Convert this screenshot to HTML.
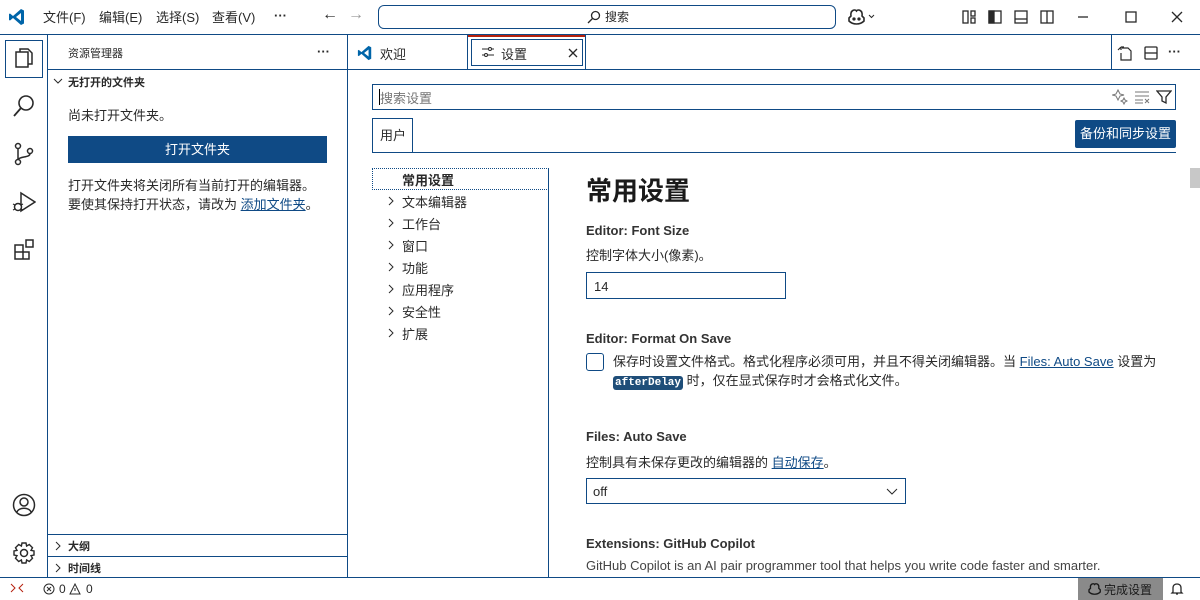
<!DOCTYPE html>
<html><head><meta charset="utf-8"><style>
*{box-sizing:border-box;margin:0;padding:0}
body{width:1200px;height:600px;overflow:hidden;background:#fff;font-family:"Liberation Sans","Noto Sans CJK SC",sans-serif;font-size:13px;color:#292929;position:relative}
.a{position:absolute}
.b{background:#0f4a85}
.t{white-space:nowrap}
svg{position:absolute;fill:none;stroke:#292929;stroke-width:1.3}
a{color:#0f4a85;text-decoration:underline}
</style></head><body>
<!-- title bar -->
<div class="a b" style="left:0;top:34px;width:1200px;height:1px"></div>
<svg style="left:8px;top:8px" width="18" height="18" viewBox="0 0 18 18"><path d="M13 1 L16 2.5 V15.5 L13 17 L5 10 L2 12.5 L1 12 V6 L2 5.5 L5 8 Z M13 5 L8 9 L13 13 Z" fill="#0065a9" stroke="none"/></svg>
<div class="a t" style="left:43px;top:7px">文件(F)</div>
<div class="a t" style="left:99px;top:7px">编辑(E)</div>
<div class="a t" style="left:156px;top:7px">选择(S)</div>
<div class="a t" style="left:212px;top:7px">查看(V)</div>
<div class="a t" style="left:274px;top:8px;font-weight:bold">···</div>
<div class="a t" style="left:322px;top:6px;font-size:16px">←</div>
<div class="a t" style="left:348px;top:6px;font-size:16px;color:#999">→</div>
<div class="a" style="left:378px;top:5px;width:458px;height:24px;border:1px solid #0f4a85;border-radius:6px"></div>
<svg style="left:587px;top:10px" width="14" height="14" viewBox="0 0 14 14"><circle cx="8.5" cy="5.5" r="4"/><path d="M5.5 8.5 L1 13"/></svg>
<div class="a t" style="left:605px;top:8px;font-size:12px">搜索</div>
<svg style="left:848px;top:8px" width="28" height="18" viewBox="0 0 28 18"><path d="M3 8 C2 2 7 1 8.5 3 C10 1 15 2 14 8 L16 10 V13 C12 17 5 17 1 13 V10 Z" fill="#fff" stroke="#292929" stroke-width="1.6"/><circle cx="6" cy="11" r="1" fill="#292929"/><circle cx="11" cy="11" r="1" fill="#292929"/><path d="M21 7 L23.5 9.5 L26 7" stroke-width="1"/></svg>
<svg style="left:962px;top:10px" width="14" height="14" viewBox="0 0 14 14"><rect x="1" y="1" width="5" height="12"/><rect x="9" y="1" width="4" height="5"/><rect x="9" y="8" width="4" height="5"/></svg>
<svg style="left:988px;top:10px" width="14" height="14" viewBox="0 0 14 14"><rect x="1" y="1" width="12" height="12"/><rect x="1" y="1" width="5" height="12" fill="#292929"/></svg>
<svg style="left:1014px;top:10px" width="14" height="14" viewBox="0 0 14 14"><rect x="1" y="1" width="12" height="12"/><path d="M1 9 H13"/></svg>
<svg style="left:1040px;top:10px" width="14" height="14" viewBox="0 0 14 14"><rect x="1" y="1" width="12" height="12"/><path d="M7 1 V13"/></svg>
<svg style="left:1076px;top:10px" width="14" height="14" viewBox="0 0 14 14"><path d="M2 7 H12"/></svg>
<svg style="left:1124px;top:10px" width="14" height="14" viewBox="0 0 14 14"><rect x="2" y="2" width="10" height="10"/></svg>
<svg style="left:1170px;top:10px" width="14" height="14" viewBox="0 0 14 14"><path d="M2 2 L12 12 M12 2 L2 12"/></svg>
<!-- activity bar -->
<div class="a b" style="left:47px;top:35px;width:1px;height:542px"></div>
<div class="a" style="left:5px;top:40px;width:38px;height:38px;border:1px solid #0f4a85"></div>
<svg style="left:12px;top:46px" width="24" height="24" viewBox="0 0 24 24"><path d="M8 6 V3 H16 L20 7 V18 H16" stroke-width="1.5"/><rect x="4" y="6" width="12" height="15" stroke-width="1.5"/></svg>
<svg style="left:12px;top:94px" width="24" height="24" viewBox="0 0 24 24"><circle cx="14" cy="9" r="7" stroke-width="1.6"/><path d="M9 14 L2 22" stroke-width="1.8"/></svg>
<svg style="left:12px;top:142px" width="24" height="24" viewBox="0 0 24 24"><circle cx="6" cy="4" r="2.5" stroke-width="1.5"/><circle cx="6" cy="20" r="2.5" stroke-width="1.5"/><circle cx="18" cy="9" r="2.5" stroke-width="1.5"/><path d="M6 6.5 V17.5 M18 11.5 C18 16 8 14 6 17.5" stroke-width="1.5"/></svg>
<svg style="left:12px;top:190px" width="24" height="24" viewBox="0 0 24 24"><path d="M9 3 L23 12 L9 21 Z" stroke-width="1.5"/><circle cx="6" cy="17" r="3.5" fill="#fff" stroke-width="1.5"/><path d="M1 14 L3 15 M1 20 L3 19 M11 14 L9 15 M11 20 L9 19" stroke-width="1.2"/></svg>
<svg style="left:12px;top:238px" width="24" height="24" viewBox="0 0 24 24"><path d="M3 7 H11 V21 H3 Z M3 14 H17 V21 H11 M14 2 L21 2 L21 9 L14 9 Z" stroke-width="1.5"/></svg>
<svg style="left:12px;top:493px" width="24" height="24" viewBox="0 0 24 24"><circle cx="12" cy="12" r="10.5" stroke-width="1.5"/><circle cx="12" cy="9" r="4" stroke-width="1.5"/><path d="M5 19 C7 14 17 14 19 19" stroke-width="1.5"/></svg>
<svg style="left:12px;top:541px" width="24" height="24" viewBox="0 0 24 24"><circle cx="12" cy="12" r="3.5" stroke-width="1.5"/><path d="M10 2 H14 L14.6 5 L17.3 3.5 L20.5 6.7 L19 9.4 L22 10 V14 L19 14.6 L20.5 17.3 L17.3 20.5 L14.6 19 L14 22 H10 L9.4 19 L6.7 20.5 L3.5 17.3 L5 14.6 L2 14 V10 L5 9.4 L3.5 6.7 L6.7 3.5 L9.4 5 Z" stroke-width="1.4"/></svg>
<!-- sidebar -->
<div class="a b" style="left:347px;top:35px;width:1px;height:542px"></div>
<div class="a b" style="left:48px;top:69px;width:299px;height:1px"></div>
<div class="a t" style="left:68px;top:45px;font-size:11px">资源管理器</div>
<div class="a t" style="left:317px;top:44px;font-weight:bold">···</div>
<svg style="left:53px;top:77px" width="10" height="8" viewBox="0 0 10 8"><path d="M1 2 L5 6 L9 2" stroke-width="1"/></svg>
<div class="a t" style="left:68px;top:74px;font-size:11px;font-weight:bold">无打开的文件夹</div>
<div class="a t" style="left:68px;top:105px">尚未打开文件夹。</div>
<div class="a b t" style="left:68px;top:136px;width:259px;height:27px;color:#fff;text-align:center;line-height:27px">打开文件夹</div>
<div class="a t" style="left:68px;top:176px;line-height:19px">打开文件夹将关闭所有当前打开的编辑器。<br>要使其保持打开状态，请改为 <a>添加文件夹</a>。</div>
<div class="a b" style="left:48px;top:534px;width:299px;height:1px"></div>
<div class="a b" style="left:48px;top:556px;width:299px;height:1px"></div>
<svg style="left:54px;top:541px" width="8" height="10" viewBox="0 0 8 10"><path d="M2 1 L6 5 L2 9" stroke-width="1"/></svg>
<svg style="left:54px;top:563px" width="8" height="10" viewBox="0 0 8 10"><path d="M2 1 L6 5 L2 9" stroke-width="1"/></svg>
<div class="a t" style="left:68px;top:538px;font-size:11px;font-weight:bold">大纲</div>
<div class="a t" style="left:68px;top:560px;font-size:11px;font-weight:bold">时间线</div>
<!-- tabs -->
<div class="a b" style="left:348px;top:69px;width:852px;height:1px"></div>
<div class="a b" style="left:467px;top:35px;width:1px;height:34px"></div>
<div class="a b" style="left:1111px;top:35px;width:1px;height:34px"></div>
<div class="a" style="left:468px;top:35px;width:118px;height:2px;background:#b5200d"></div>
<div class="a b" style="left:585px;top:35px;width:1px;height:34px"></div>
<div class="a" style="left:471px;top:39px;width:112px;height:27px;border:1px solid #0f4a85"></div>
<svg style="left:357px;top:45px" width="16" height="16" viewBox="0 0 18 18"><path d="M13 1 L16 2.5 V15.5 L13 17 L5 10 L2 12.5 L1 12 V6 L2 5.5 L5 8 Z M13 5 L8 9 L13 13 Z" fill="#0065a9" stroke="none"/></svg>
<div class="a t" style="left:380px;top:44px">欢迎</div>
<svg style="left:481px;top:46px" width="14" height="12" viewBox="0 0 14 12"><path d="M1 3 H13 M1 9 H13" stroke-width="1"/><circle cx="9" cy="3" r="1.5" fill="#fff" stroke-width="1"/><circle cx="5" cy="9" r="1.5" fill="#fff" stroke-width="1"/></svg>
<div class="a t" style="left:501px;top:44px">设置</div>
<svg style="left:567px;top:47px" width="12" height="12" viewBox="0 0 12 12"><path d="M2 2 L10 10 M10 2 L2 10"/></svg>
<svg style="left:1117px;top:45px" width="16" height="16" viewBox="0 0 16 16"><path d="M5 3 H11 L14 6 V15 H4 V8 M1 5 L4 2 M4 2 V5 M4 2 H7" stroke-width="1.2"/></svg>
<svg style="left:1143px;top:45px" width="16" height="16" viewBox="0 0 16 16"><rect x="2" y="2" width="12" height="12" rx="1"/><path d="M2 8 H14"/></svg>
<div class="a t" style="left:1168px;top:44px;font-weight:bold">···</div>
<!-- settings -->
<div class="a" style="left:372px;top:84px;width:804px;height:26px;border:1px solid #0f4a85"></div>
<div class="a" style="left:379px;top:89px;width:1px;height:16px;background:#000"></div>
<div class="a t" style="left:380px;top:88px;color:#767676">搜索设置</div>
<svg style="left:1112px;top:89px" width="16" height="16" viewBox="0 0 16 16"><path d="M6 1 L8 5 L12 6 L8 7 L6 11 L4 7 L0.5 6 L4 5 Z M12 9 L13 11 L15 12 L13 13 L12 15 L11 13 L9 12 L11 11 Z" stroke="#777" stroke-width="1"/></svg>
<svg style="left:1134px;top:90px" width="16" height="14" viewBox="0 0 16 14"><path d="M1 2 H15 M1 6 H15 M1 10 H9 M1 13 H9 M11 9 L15 13 M15 9 L11 13" stroke="#777" stroke-width="1"/></svg>
<svg style="left:1156px;top:89px" width="16" height="16" viewBox="0 0 16 16"><path d="M1 2 H15 L10 8 V14 L6 12 V8 Z"/></svg>
<div class="a" style="left:372px;top:118px;width:41px;height:35px;border:1px solid #0f4a85;border-bottom:none"></div>
<div class="a t" style="left:380px;top:125px">用户</div>
<div class="a b t" style="left:1075px;top:120px;width:101px;height:28px;border-radius:2px;color:#fff;line-height:27px;text-align:center">备份和同步设置</div>
<div class="a b" style="left:372px;top:152px;width:804px;height:1px"></div>
<div class="a b" style="left:548px;top:168px;width:1px;height:409px"></div>
<div class="a" style="left:372px;top:168px;width:177px;height:22px;border:1px dotted #0f4a85"></div>
<div class="a t" style="left:402px;top:170px;font-weight:bold">常用设置</div>
<svg style="left:387px;top:196px" width="8" height="10" viewBox="0 0 8 10"><path d="M2 1 L6 5 L2 9" stroke-width="1"/></svg>
<svg style="left:387px;top:218px" width="8" height="10" viewBox="0 0 8 10"><path d="M2 1 L6 5 L2 9" stroke-width="1"/></svg>
<svg style="left:387px;top:240px" width="8" height="10" viewBox="0 0 8 10"><path d="M2 1 L6 5 L2 9" stroke-width="1"/></svg>
<svg style="left:387px;top:262px" width="8" height="10" viewBox="0 0 8 10"><path d="M2 1 L6 5 L2 9" stroke-width="1"/></svg>
<svg style="left:387px;top:284px" width="8" height="10" viewBox="0 0 8 10"><path d="M2 1 L6 5 L2 9" stroke-width="1"/></svg>
<svg style="left:387px;top:306px" width="8" height="10" viewBox="0 0 8 10"><path d="M2 1 L6 5 L2 9" stroke-width="1"/></svg>
<svg style="left:387px;top:328px" width="8" height="10" viewBox="0 0 8 10"><path d="M2 1 L6 5 L2 9" stroke-width="1"/></svg>
<div class="a t" style="left:402px;top:192px;line-height:22px">文本编辑器<br>工作台<br>窗口<br>功能<br>应用程序<br>安全性<br>扩展</div>
<div class="a t" style="left:586px;top:171px;font-size:26px;font-weight:bold;color:#1a1a1a">常用设置</div>
<div class="a t" style="left:586px;top:223px;font-weight:bold;color:#333">Editor: Font Size</div>
<div class="a t" style="left:586px;top:245px">控制字体大小(像素)。</div>
<div class="a" style="left:586px;top:272px;width:200px;height:27px;border:1px solid #0f4a85;padding:6px 7px">14</div>
<div class="a t" style="left:586px;top:331px;font-weight:bold;color:#333">Editor: Format On Save</div>
<div class="a" style="left:586px;top:353px;width:18px;height:18px;border:1px solid #0f4a85;border-radius:3px"></div>
<div class="a t" style="left:613px;top:352px;line-height:19px">保存时设置文件格式。格式化程序必须可用，并且不得关闭编辑器。当 <a>Files: Auto Save</a> 设置为<br><span style="background:#1f4e79;color:#fff;font-family:'Liberation Mono',monospace;font-size:11px;font-weight:bold;padding:1px 2px;border-radius:3px">afterDelay</span> 时，仅在显式保存时才会格式化文件。</div>
<div class="a t" style="left:586px;top:429px;font-weight:bold;color:#333">Files: Auto Save</div>
<div class="a t" style="left:586px;top:452px">控制具有未保存更改的编辑器的 <a>自动保存</a>。</div>
<div class="a" style="left:586px;top:478px;width:320px;height:26px;border:1px solid #0f4a85;padding:5px 6px">off</div>
<svg style="left:886px;top:486px" width="12" height="10" viewBox="0 0 12 10"><path d="M1 3 L6 8 L11 3" stroke-width="1"/></svg>
<div class="a t" style="left:586px;top:536px;font-weight:bold;color:#333">Extensions: GitHub Copilot</div>
<div class="a t" style="left:586px;top:558px;color:#444">GitHub Copilot is an AI pair programmer tool that helps you write code faster and smarter.</div>
<div class="a" style="left:1190px;top:168px;width:10px;height:20px;background:#c8c8c8"></div>
<!-- status bar -->
<div class="a b" style="left:0;top:577px;width:1200px;height:1px"></div>
<svg style="left:10px;top:582px" width="14" height="12" viewBox="0 0 14 12"><path d="M1 2 L5 6 L1 10 M13 2 L9 6 L13 10" stroke="#b5200d" stroke-width="1"/></svg>
<svg style="left:43px;top:583px" width="12" height="12" viewBox="0 0 12 12"><circle cx="6" cy="6" r="5" stroke-width="1"/><path d="M4 4 L8 8 M8 4 L4 8" stroke-width="1"/></svg>
<div class="a t" style="left:59px;top:582px;font-size:12px">0</div>
<svg style="left:69px;top:583px" width="12" height="12" viewBox="0 0 12 12"><path d="M6 1 L11 11 H1 Z M6 5 V8" stroke-width="1"/></svg>
<div class="a t" style="left:86px;top:582px;font-size:12px">0</div>
<div class="a" style="left:1078px;top:578px;width:85px;height:22px;background:#8a8a8a"></div>
<svg style="left:1088px;top:583px" width="14" height="12" viewBox="0 0 18 16"><path d="M3 7 C2 1 7 0 8.5 2 C10 0 15 1 14 7 L16 9 V12 C12 16 5 16 1 12 V9 Z" stroke="#1a1a1a" stroke-width="1.8"/></svg>
<div class="a t" style="left:1104px;top:581px;font-size:12px;color:#1a1a1a">完成设置</div>
<svg style="left:1170px;top:582px" width="14" height="14" viewBox="0 0 14 14"><path d="M3 10 V6 C3 3 5 2 7 2 C9 2 11 3 11 6 V10 L12 11 H2 Z M6 12 H8"/></svg>
</body></html>
